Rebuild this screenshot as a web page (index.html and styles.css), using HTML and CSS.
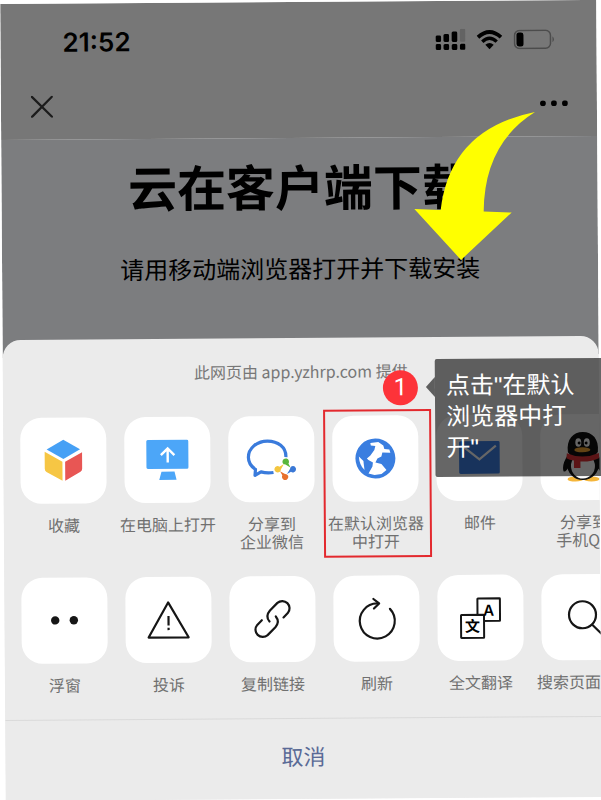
FILE: index.html
```html
<!DOCTYPE html>
<html lang="zh-CN">
<head>
  <meta charset="UTF-8" />
  <meta name="viewport" content="width=device-width, initial-scale=1.0"/>
  <title>云在客户端下载</title>
  <link rel="stylesheet" href="styles.css">
</head>
<body>
  <div class="stage">
    <div class="phone">
      <header class="header">
        <div class="status-bar">
          <span class="time">21:52</span>
          <div class="status-icons">
            <svg width="30" height="22" viewBox="0 0 30 22">
              <rect x="0" y="6.500" width="5.600" height="6.500" rx="1.500"/>
              <rect x="8" y="5" width="5.600" height="8" rx="1.500"/>
              <rect x="16.200" y="2.500" width="5.600" height="10.500" rx="1.500"/>
              <rect x="24.400" y="0" width="5.600" height="13" rx="1.500" fill="#636363"/>
              <rect x="0" y="15" width="5.600" height="6" rx="1.500"/>
              <rect x="8" y="15" width="5.600" height="6" rx="1.500"/>
              <rect x="16.200" y="15" width="5.600" height="6" rx="1.500"/>
              <rect x="24.400" y="15" width="5.600" height="6" rx="1.500"/>
            </svg>
            <svg width="26" height="20" viewBox="0 0 26 20">
              <path d="M1.500 7.500Q13-3 24.500 7.500" fill="none" stroke="#000" stroke-width="3.800"/>
              <path d="M5.800 12Q13 5.200 20.200 12" fill="none" stroke="#000" stroke-width="3.400"/>
              <path d="M8.800 15Q13 11.500 17.200 15L13 19.500z"/>
            </svg>
            <svg width="42" height="20" viewBox="0 0 42 20">
              <rect x="1" y="1" width="36" height="18" rx="5" fill="none" stroke="#4c4c4c" stroke-width="1.500"/>
              <rect x="3" y="3" width="7" height="14" rx="2.500"/>
              <path d="M39 7q3 3 0 6z" fill="#4c4c4c"/>
            </svg>
          </div>
        </div>
        <div class="nav-bar">
          <button class="icon-button" aria-label="关闭">
            <svg width="22" height="22" viewBox="0 0 22 22"><path d="M1 1L21 21M21 1L1 21" stroke="#1c1c1c" stroke-width="2.200" stroke-linecap="round"/></svg>
          </button>
          <button class="icon-button" aria-label="更多">
            <svg width="28" height="6" viewBox="0 0 28 6"><circle cx="3" cy="3" r="2.900"/><circle cx="14" cy="3" r="2.900"/><circle cx="25" cy="3" r="2.900"/></svg>
          </button>
        </div>
      </header>

      <main class="page">
        <h1>云在客户端下载</h1>
        <p>请用移动端浏览器打开并下载安装</p>
      </main>

      <section class="sheet">
        <p class="provider">此网页由 app.yzhrp.com 提供</p>

        <ul class="actions">
          <li>
            <button class="action">
              <svg class="tile" viewBox="0 0 86 86">
                <path d="M43 22L59.700 31.700L43 41.300L26.300 31.700z" fill="#46a0f5"/>
                <path d="M24.300 34L42 44V63L26 54.200Q24.300 53.200 24.300 51z" fill="#f6c644"/>
                <path d="M44.700 44L61.700 34.700V51Q61.700 53.200 60 54.200L44.700 63z" fill="#e85654"/>
              </svg>
              <span class="label">收藏</span>
            </button>
          </li>
          <li>
            <button class="action">
              <svg class="tile" viewBox="0 0 86 86">
                <rect x="22" y="23" width="42" height="29" rx="1.500" fill="#4ca6f8"/>
                <path d="M37 54.700H50L52 63H34.700z" fill="#4ca6f8"/>
                <path d="M43.300 45.500V32M36.500 38.200L43.300 31.400L50 38.200" fill="none" stroke="#fff" stroke-width="2.400"/>
              </svg>
              <span class="label">在电脑上打开</span>
            </button>
          </li>
          <li>
            <button class="action">
              <svg class="tile" viewBox="0 0 86 86">
                <path d="M57.500 41C58 31 49.500 24.800 39 24.800C28.500 24.800 20 32 20 41C20 46 22.500 50 27 53L26.500 59L32.500 55.600Q38.500 57.400 45 56.300" fill="none" stroke="#3a7bdc" stroke-width="3.200" stroke-linejoin="round"/>
                <path d="M54 45.500a3.300 3.300 0 1 1 6 2L62 51.500L57 48.500Q54 48 54 45.500z" fill="#59b63c"/>
                <path d="M64.500 50a3.200 3.200 0 1 1-2 5.800L58.500 58L61.500 53Q62 50 64.500 50z" fill="#3a78d6"/>
                <path d="M59.800 61a3.200 3.200 0 1 1-6-1.800L51.500 55L56.500 58Q59.800 58.500 59.800 61z" fill="#e8702d"/>
                <path d="M49 56.300a3.200 3.200 0 1 1 2-5.800L55.500 48L52.500 53Q52 56.300 49 56.300z" fill="#f4c63f"/>
              </svg>
              <span class="label">分享到<br>企业微信</span>
            </button>
          </li>
          <li>
            <button class="action highlighted">
              <svg class="tile" viewBox="0 0 86 86">
                <circle cx="43" cy="43" r="20" fill="#3a7ee0"/>
                <path d="M38 27.500L46 26.500L51 30L52 33.500L57 34L58 37.500L50 37L49 41L45 43L43 47L49 48.500L54 54.500L49 58.500L42 59.500L36 58L40 51L40.500 47L36 44.500L34.500 43L38 40L42 34.500L43 30.500L38.500 30z" fill="#fff"/>
                <path d="M26.500 41L31 45.500L32 54.500Q27 50 26.500 41z" fill="#fff"/>
              </svg>
              <span class="label">在默认浏览器<br>中打开</span>
            </button>
          </li>
          <li>
            <button class="action">
              <svg class="tile" viewBox="0 0 86 86">
                <rect x="22.700" y="26.300" width="40.600" height="32.700" rx="1.500" fill="#3d80e5"/>
                <path d="M26 31L43 44.500L59.500 31" fill="none" stroke="#fff" stroke-width="2.200"/>
              </svg>
              <span class="label">邮件</span>
            </button>
          </li>
          <li>
            <button class="action">
              <svg class="tile" viewBox="0 0 86 86">
                <ellipse cx="35" cy="65" rx="8" ry="2.500" fill="#f5b63b"/>
                <ellipse cx="51" cy="65" rx="8" ry="2.500" fill="#f5b63b"/>
                <path d="M28 40Q21 50 23 57Q25 59 29 52zM57 40Q64 50 62 57Q60 59 56 52z" fill="#111"/>
                <ellipse cx="42.500" cy="50" rx="16" ry="16" fill="#111"/>
                <ellipse cx="42.500" cy="52" rx="12" ry="12.500" fill="#fff"/>
                <path d="M27.500 38C26 25 33 18 42.500 18S59 25 57.500 38Q53 45 42.500 45T27.500 38z" fill="#111"/>
                <ellipse cx="38" cy="28.500" rx="3" ry="4.300" fill="#fff"/>
                <ellipse cx="46.500" cy="28.500" rx="3" ry="4.300" fill="#fff"/>
                <circle cx="38.800" cy="29" r="1.500"/><circle cx="45.800" cy="29" r="1.500"/>
                <ellipse cx="42" cy="35.800" rx="8" ry="2.500" fill="#f5a832"/>
                <path d="M26.500 39Q42 46 58.500 39L59 44Q51 48 40 47.500V54H33.500V46.500Q29 46 26 44z" fill="#e33438"/>
              </svg>
              <span class="label">分享到<br>手机QQ</span>
            </button>
          </li>
        </ul>

        <ul class="actions">
          <li>
            <button class="action">
              <svg class="tile" viewBox="0 0 86 86"><circle cx="33.700" cy="42.700" r="4.200" fill="#161616"/><circle cx="52.300" cy="42.700" r="4.200" fill="#161616"/></svg>
              <span class="label">浮窗</span>
            </button>
          </li>
          <li>
            <button class="action">
              <svg class="tile line" viewBox="0 0 86 86">
                <path d="M42.700 25.500L63 60.500H23z"/>
                <path d="M43 39V48.500M43 50.800V53.200" stroke-linecap="butt"/>
              </svg>
              <span class="label">投诉</span>
            </button>
          </li>
          <li>
            <button class="action">
              <svg class="tile line" viewBox="0 0 86 86">
                <path d="M54 41.300L58.300 37A7.300 7.300 0 0 0 48 26.700L40.500 34.200Q35.500 40 40 45.300"/>
                <path d="M32.300 44L27.700 48.600A7.300 7.300 0 0 0 38 58.900L45.800 51Q50.500 45.600 46.300 40.300"/>
              </svg>
              <span class="label">复制链接</span>
            </button>
          </li>
          <li>
            <button class="action">
              <svg class="tile line" viewBox="0 0 86 86">
                <path d="M56.500 33.500A17.500 17.500 0 1 1 44.500 28"/>
                <path d="M40 23.500L45.700 28L40.500 33"/>
              </svg>
              <span class="label">刷新</span>
            </button>
          </li>
          <li>
            <button class="action">
              <svg class="tile" viewBox="0 0 86 86">
                <rect x="40" y="23.700" width="22.500" height="22.500" rx="0.500" fill="#fff" stroke="#161616" stroke-width="2"/>
                <rect x="23.500" y="40" width="23" height="23" rx="0.500" fill="#fff" stroke="#161616" stroke-width="2"/>
                <text class="glyph-latin" x="51.300" y="41" text-anchor="middle">A</text>
                <text class="glyph-han" x="35" y="57" text-anchor="middle">文</text>
              </svg>
              <span class="label">全文翻译</span>
            </button>
          </li>
          <li>
            <button class="action">
              <svg class="tile line" viewBox="0 0 86 86"><circle cx="41" cy="40.700" r="13.500"/><path d="M50.700 50.700L62 62"/></svg>
              <span class="label">搜索页面内容</span>
            </button>
          </li>
        </ul>

        <button class="cancel">取消</button>
      </section>
    </div>

    <!-- guide annotations -->
    <svg class="arrow" width="130" height="156" viewBox="410 108 130 156">
      <path d="M536 112.700Q451 129 441 210L414.700 208.700L461 260L512 213L484 211.700Q485 144 536 112.700z" fill="#ff0"/>
    </svg>
    <span class="step">1</span>
    <div class="tooltip">点击"在默认浏览器中打开"</div>
  </div>
</body>
</html>
```
FILE: styles.css
```css
* {
  box-sizing: border-box;
}
body {
  margin: 0;
  background-color: #fff;
  color: #000;
  font-family: "Noto Sans CJK SC", sans-serif;
  overflow: hidden;
}
h1, p, ul {
  margin: 0;
  padding: 0;
}
button {
  border: none;
  padding: 0;
  background: none;
  color: inherit;
  font-family: inherit;
  cursor: pointer;
}
svg {
  display: block;
}

/* the whole capture leans slightly to the left */
.stage {
  position: relative;
  padding: 2px 2px 3px 3px;
  transform: rotate(-0.4deg);
}
.phone {
  overflow: hidden;
  background-color: #ebebeb;
}

/* header */
.header {
  background-color: #777;
}
.status-bar {
  display: flex;
  justify-content: space-between;
  align-items: center;
  padding: 22px 41px 14px 62px;
}
.time {
  font-family: Inter, sans-serif;
  font-size: 26px;
  font-weight: 600;
  line-height: 34px;
}
.status-icons {
  display: flex;
  align-items: center;
  gap: 11px;
}
.nav-bar {
  display: flex;
  justify-content: space-between;
  align-items: center;
  height: 66px;
  padding: 0 29px 0 30px;
}

/* page behind the sheet, it shows round the sheet's corners */
.page {
  padding: 22px 0 72px;
  background-color: #7c7d7f;
  text-align: center;
}
.page h1 {
  font-size: 49px;
  font-weight: 700;
  line-height: 50px;
}
.page p {
  margin-top: 42px;
  font-size: 24px;
  line-height: 32px;
}

/* bottom sheet */
.sheet {
  margin-top: -18px;
  padding-top: 23px;
  border-radius: 18px 18px 0 0;
  background-color: #ebebeb;
}
.provider {
  margin-bottom: 35px;
  color: #777;
  font-size: 16px;
  line-height: 20px;
  text-align: center;
}
.actions {
  display: flex;
  gap: 18px;
  padding: 0 17px 26px;
  list-style: none;
}
.action {
  position: relative;
  display: flex;
  flex-direction: column;
  align-items: center;
  gap: 12px;
  width: 86px;
}
.tile {
  width: 86px;
  height: 86px;
  border-radius: 21px;
  background-color: #fff;
}
.line {
  fill: none;
  stroke: #161616;
  stroke-width: 2.2px;
  stroke-linecap: round;
  stroke-linejoin: round;
}
.label {
  color: #707070;
  font-size: 16px;
  line-height: 18px;
  white-space: nowrap;
}
.glyph-latin {
  font-family: Inter, sans-serif;
  font-size: 15px;
  font-weight: 600;
}
.glyph-han {
  font-size: 15px;
  font-weight: 700;
}
.highlighted::after {
  content: "";
  position: absolute;
  inset: -6px -13px -8px -9px;
  border: 2px solid #e3292e;
}
.cancel {
  display: block;
  width: 100%;
  padding: 20px 0 28px;
  border-top: 1px solid #dadada;
  color: #5a6a96;
  font-size: 22px;
  line-height: 32px;
}

/* guide */
.arrow {
  position: absolute;
  top: 109px;
  right: 60px;
}
.step {
  position: absolute;
  top: 371px;
  left: 383px;
  width: 35px;
  border-radius: 50%;
  background-color: #fd3339;
  color: #fff;
  font-family: Roboto, sans-serif;
  font-size: 24px;
  line-height: 35px;
  text-align: center;
}
.tooltip {
  position: absolute;
  top: 360px;
  left: 435px;
  width: 170px;
  padding: 11px 24px 14px 11px;
  border-radius: 2px;
  background-color: rgba(0, 0, 0, 0.6);
  color: #fff;
  font-family: "Liberation Sans", "Noto Sans CJK SC", sans-serif;
  font-size: 24px;
  line-height: 31px;
}
.tooltip::before {
  content: "";
  position: absolute;
  top: 18px;
  left: -9px;
  border: solid transparent;
  border-width: 10px 9px 10px 0;
  border-right-color: rgba(0, 0, 0, 0.6);
}
```
